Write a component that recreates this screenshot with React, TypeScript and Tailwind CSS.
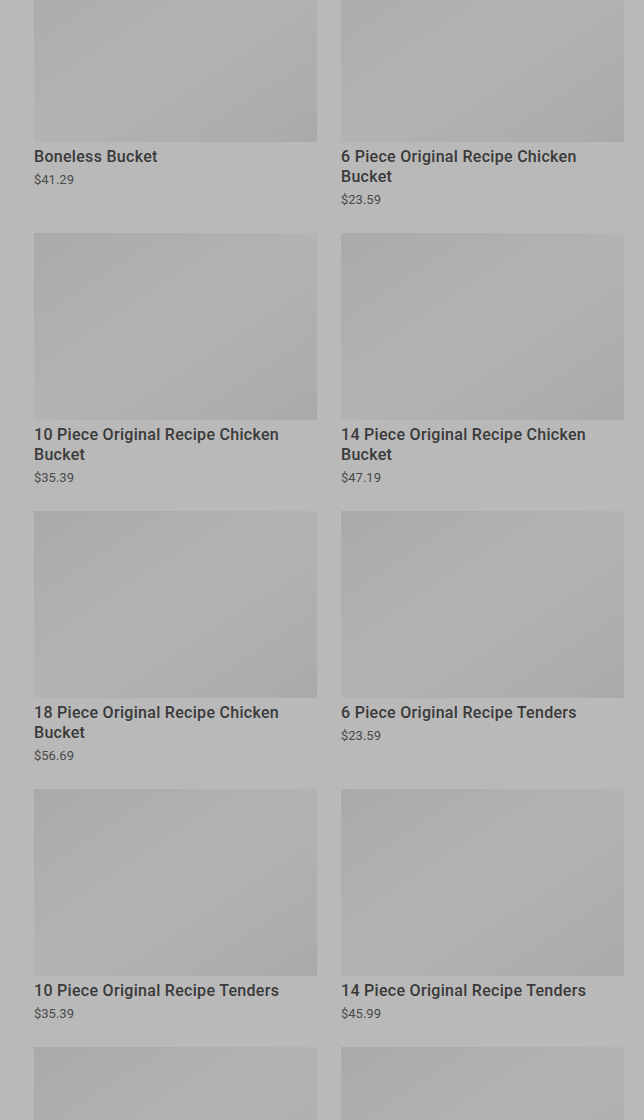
const items = [
  { name: 'Boneless Bucket', price: '$41.29' },
  { name: '6 Piece Original Recipe Chicken Bucket', price: '$23.59' },
  { name: '10 Piece Original Recipe Chicken Bucket', price: '$35.39' },
  { name: '14 Piece Original Recipe Chicken Bucket', price: '$47.19' },
  { name: '18 Piece Original Recipe Chicken Bucket', price: '$56.69' },
  { name: '6 Piece Original Recipe Tenders', price: '$23.59' },
  { name: '10 Piece Original Recipe Tenders', price: '$35.39' },
  { name: '14 Piece Original Recipe Tenders', price: '$45.99' },
  { name: '', price: '' },
  { name: '', price: '' },
];

function ProductCard({ name, price }: { name: string; price: string }) {
  return (
    <div className="flex flex-col">
      <div className="h-[187px] w-full bg-linear-to-br from-[#aaaaaa] via-[#b3b3b3] to-[#aaaaaa]" />
      {name && (
        <div className="mt-[5px] text-[16px] leading-5 font-medium tracking-[0.3px] text-[#3a3a3a]">
          {name}
        </div>
      )}
      {price && <div className="mt-[4px] text-[13px] leading-[18px] text-[#4a4a4a]">{price}</div>}
    </div>
  );
}

export default function App() {
  return (
    <div
      className="h-[1120px] w-full overflow-hidden bg-[#b9b9b9]"
      style={{ fontFamily: 'Roboto, "Liberation Sans", sans-serif' }}
    >
      <div className="-mt-[45px] grid grid-cols-2 gap-x-[24px] gap-y-[24px] pl-[34px] pr-[20px]">
        {items.map((it, i) => (
          <ProductCard key={i} name={it.name} price={it.price} />
        ))}
      </div>
    </div>
  );
}
